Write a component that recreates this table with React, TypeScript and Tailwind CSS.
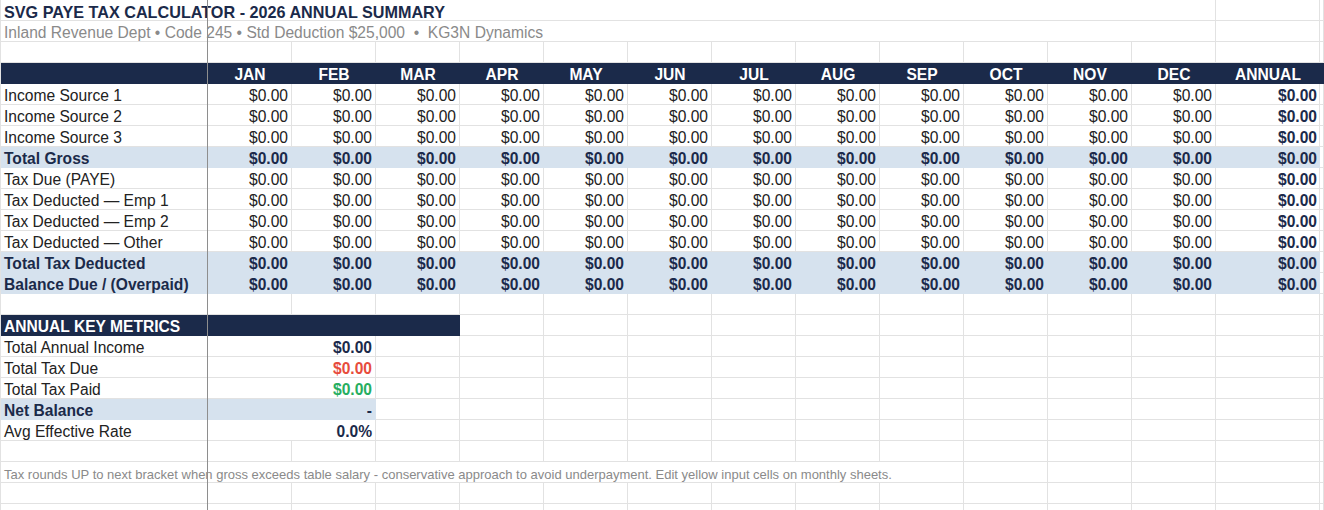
import React from 'react';

const months = ['JAN', 'FEB', 'MAR', 'APR', 'MAY', 'JUN', 'JUL', 'AUG', 'SEP', 'OCT', 'NOV', 'DEC'];

type Row = { label: string; total?: boolean };

const rows: Row[] = [
  { label: 'Income Source 1' },
  { label: 'Income Source 2' },
  { label: 'Income Source 3' },
  { label: 'Total Gross', total: true },
  { label: 'Tax Due (PAYE)' },
  { label: 'Tax Deducted — Emp 1' },
  { label: 'Tax Deducted — Emp 2' },
  { label: 'Tax Deducted — Other' },
  { label: 'Total Tax Deducted', total: true },
  { label: 'Balance Due / (Overpaid)', total: true },
];

const metrics = [
  { label: 'Total Annual Income', value: '$0.00', color: 'text-[#1b2a4a]' },
  { label: 'Total Tax Due', value: '$0.00', color: 'text-[#e74c3c]' },
  { label: 'Total Tax Paid', value: '$0.00', color: 'text-[#27ae60]' },
  { label: 'Net Balance', value: '-', color: 'text-[#1b2a4a]', total: true },
  { label: 'Avg Effective Rate', value: '0.0%', color: 'text-[#1b2a4a]' },
];

// gridline cell
const cell = 'h-[21px] shrink-0 border-b border-r border-[#e2e2e2] overflow-visible whitespace-nowrap';

const EmptyRow: React.FC = () => (
  <div className="flex">
    <div className={`${cell} w-[207px]`} />
    {months.map((m) => (
      <div key={m} className={`${cell} w-[84px]`} />
    ))}
    <div className={`${cell} w-[104px]`} />
    <div className={`${cell} flex-1`} />
  </div>
);

const App: React.FC = () => {
  return (
    <div className="relative h-[510px] w-full overflow-hidden bg-white font-['Liberation_Sans',Arial,sans-serif] text-[15.6px] leading-[24px] text-[#222]">
      <div className="border-l border-[#e2e2e2]">
        {/* Title */}
        <div className="flex">
          <div className={`${cell} w-[1215px] pl-[3px] text-[16.2px] leading-[24px] font-bold text-[#1b2a4a]`}>
            SVG PAYE TAX CALCULATOR - 2026 ANNUAL SUMMARY
          </div>
          <div className={`${cell} w-[104px]`} />
          <div className={`${cell} flex-1`} />
        </div>
        <div className="flex">
          <div className={`${cell} w-[1215px] whitespace-pre pl-[3px] text-[#8a8a8a]`}>
            {'Inland Revenue Dept • Code 245 • Std Deduction $25,000  •  KG3N Dynamics'}
          </div>
          <div className={`${cell} w-[104px]`} />
          <div className={`${cell} flex-1`} />
        </div>
        <EmptyRow />

        {/* Month header */}
        <div className="flex h-[21px] bg-[#1b2a4a] font-bold text-white">
          <div className="w-[207px] shrink-0" />
          {months.map((m) => (
            <div key={m} className="h-[21px] w-[84px] shrink-0 text-center">
              {m}
            </div>
          ))}
          <div className="h-[21px] w-[104px] shrink-0 text-center">ANNUAL</div>
          <div className="flex-1" />
        </div>

        {/* Data rows */}
        {rows.map((r) => {
          const c = r.total
            ? 'h-[21px] shrink-0 border-b border-r border-[#d6e2ee] whitespace-nowrap'
            : cell;
          return (
            <div
              key={r.label}
              className={`flex ${r.total ? 'bg-[#d6e2ee] font-bold text-[#1b2a4a]' : ''}`}
            >
              <div className={`${c} w-[207px] pl-[3px]`}>{r.label}</div>
              {months.map((m) => (
                <div key={m} className={`${c} w-[84px] pr-[3px] text-right`}>
                  $0.00
                </div>
              ))}
              <div className={`${c} w-[104px] pr-[2px] text-right font-bold text-[#1b2a4a]`}>$0.00</div>
              <div className={`${cell} flex-1 bg-white`} />
            </div>
          );
        })}
        <EmptyRow />

        {/* Annual key metrics */}
        <div className="flex">
          <div className="h-[21px] w-[459px] shrink-0 bg-[#1b2a4a] pl-[3px] font-bold text-white">
            ANNUAL KEY METRICS
          </div>
          {months.slice(3).map((m) => (
            <div key={m} className={`${cell} w-[84px]`} />
          ))}
          <div className={`${cell} w-[104px]`} />
          <div className={`${cell} flex-1`} />
        </div>
        {metrics.map((mt) => {
          const c = mt.total
            ? 'h-[21px] shrink-0 border-b border-r border-[#d6e2ee] bg-[#d6e2ee] whitespace-nowrap'
            : cell;
          return (
            <div key={mt.label} className="flex">
              <div className={`${c} w-[207px] pl-[3px] ${mt.total ? 'font-bold text-[#1b2a4a]' : ''}`}>
                {mt.label}
              </div>
              <div className={`${c} w-[168px] pr-[3px] text-right font-bold ${mt.color}`}>{mt.value}</div>
              {months.slice(2).map((m) => (
                <div key={m} className={`${cell} w-[84px]`} />
              ))}
              <div className={`${cell} w-[104px]`} />
              <div className={`${cell} flex-1`} />
            </div>
          );
        })}
        <EmptyRow />

        {/* Footer note */}
        <div className="flex">
          <div className={`${cell} w-[963px] pl-[3px] text-[13px] leading-[25px] text-[#8a8a8a]`}>
            Tax rounds UP to next bracket when gross exceeds table salary - conservative approach to avoid
            underpayment. Edit yellow input cells on monthly sheets.
          </div>
          {months.slice(9).map((m) => (
            <div key={m} className={`${cell} w-[84px]`} />
          ))}
          <div className={`${cell} w-[104px]`} />
          <div className={`${cell} flex-1`} />
        </div>
        <EmptyRow />
        <EmptyRow />
      </div>

      {/* frozen column divider */}
      <div className="pointer-events-none absolute bottom-0 left-[207px] top-0 w-px bg-[#8e8e8e]" />
    </div>
  );
};

export default App;
